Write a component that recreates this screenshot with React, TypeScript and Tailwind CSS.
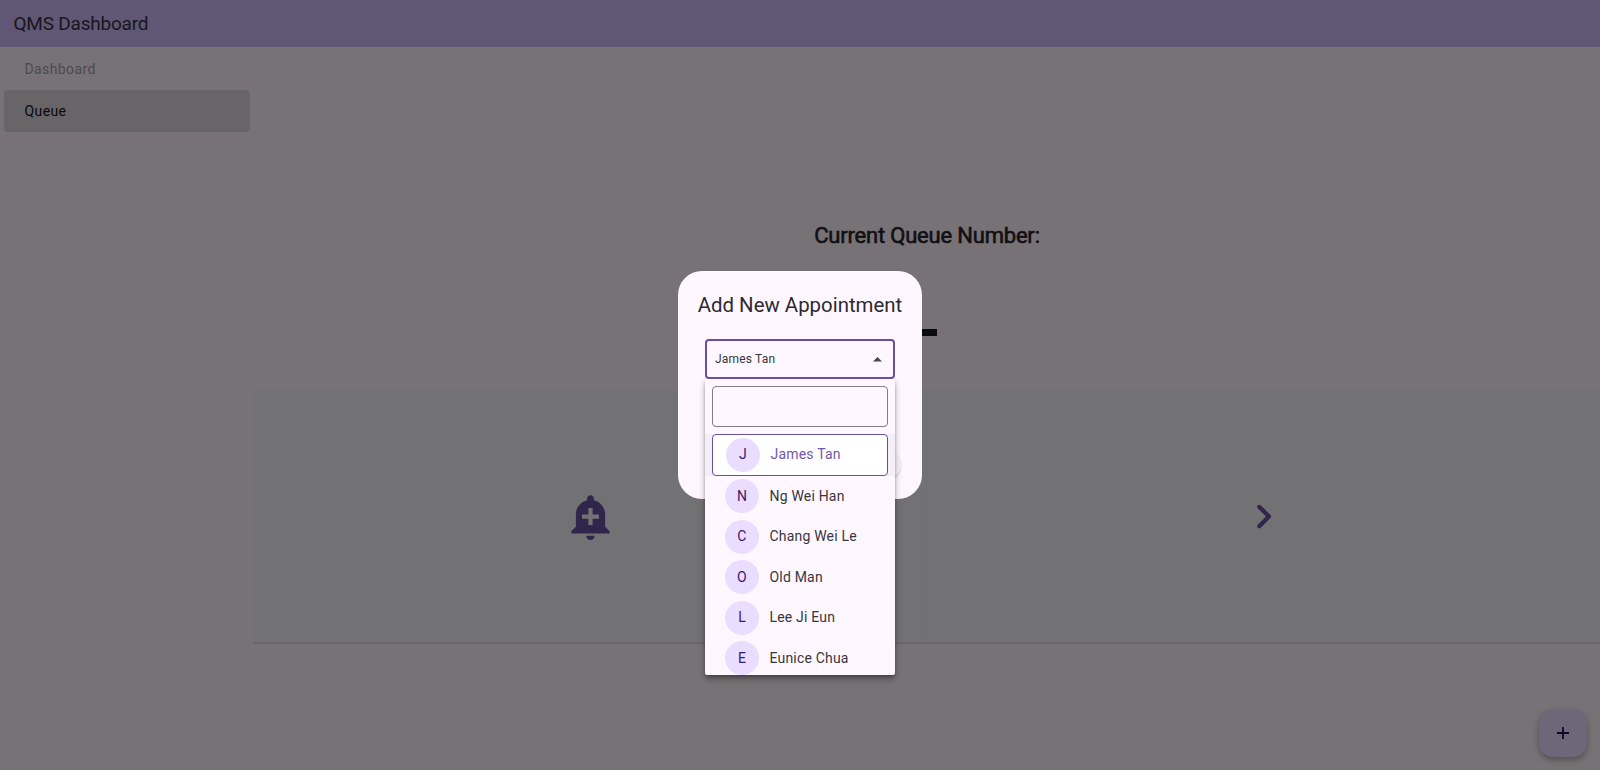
import { MdAddAlert } from 'react-icons/md';

const patients = ['James Tan', 'Ng Wei Han', 'Chang Wei Le', 'Old Man', 'Lee Ji Eun', 'Eunice Chua'];

function Avatar({ letter }: { letter: string }) {
  return (
    <span className="flex h-[34px] w-[34px] shrink-0 items-center justify-center rounded-full bg-[#eaddff] text-[14px] text-[#371a70]">
      {letter}
    </span>
  );
}

function Sidebar() {
  return (
    <nav className="w-[254px] shrink-0 pl-1 text-[14px] tracking-[0.4px]">
      <div className="flex h-[42.5px] items-center pt-[2px] pl-[20.5px] text-[#4c4a4e]">Dashboard</div>
      <div className="flex h-[42.5px] w-[245.5px] items-center rounded-[4px] bg-[#676567] pt-px pl-[20.5px] text-[#09080a]">Queue</div>
    </nav>
  );
}

function PatientMenu() {
  return (
    <div className="absolute top-full left-0 h-[296px] w-[190px] overflow-hidden rounded-b-[2px] bg-[#fef7ff] shadow-[0_4px_7px_rgba(0,0,0,0.3),0_2px_3px_rgba(0,0,0,0.2)]">
      <div className="px-[7px] pt-[7px] pb-[6.5px]">
        <input aria-label="Search" className="block h-[41px] w-full rounded-[4px] border border-[#817c86] bg-transparent px-2 outline-none" />
      </div>
      <div className="flex h-[42px] bg-[#f4eef6] px-[7px]">
        <div className="flex w-full items-center rounded-[4px] border border-[#6750a4] bg-white pl-[13px] text-[14px] tracking-[0.2px] text-[#7059a9]">
          <Avatar letter="J" />
          <span className="ml-[10.5px]">{patients[0]}</span>
        </div>
      </div>
      {patients.slice(1).map((name) => (
        <div key={name} className="flex h-[40.6px] items-center pt-[0.6px] pl-[20px] text-[14px] tracking-[0.19px] text-[#39363c]">
          <Avatar letter={name[0]} />
          <span className="ml-[10.5px]">{name}</span>
        </div>
      ))}
    </div>
  );
}

function AppointmentDialog() {
  return (
    <div className="absolute top-[271px] left-[678px] h-[228px] w-[244px] rounded-[24px] bg-[#fef7ff] pt-[20px]">
      <h2 className="text-center text-[20.4px] leading-[28px] whitespace-nowrap text-[#2c2a30]">Add New Appointment</h2>
      <div className="absolute right-[21px] bottom-[20px] h-[28px] w-[60px] rounded-full bg-[#f8f1fa] shadow-[0_1px_2px_rgba(0,0,0,0.2)]" />
      <div className="relative mx-[27px] mt-[20px] h-[40px]">
        <PatientMenu />
        <div className="relative flex h-full items-center justify-between rounded-[4px] border-2 border-[#6750a4] bg-[#fef7ff] pr-[11px] pl-[8px] text-[12px] tracking-[0.18px] text-[#39363c]">
          <span>James Tan</span>
          <svg width="9" height="5" viewBox="0 0 9 5"><path d="M0 4.5 4.5 0 9 4.5Z" fill="#49454f" /></svg>
        </div>
      </div>
    </div>
  );
}

export default function App() {
  return (
    <div className="relative flex h-[770px] w-[1600px] flex-col overflow-hidden bg-[#777276] font-[Roboto,sans-serif]">
      <header className="flex h-[47px] shrink-0 items-center bg-[#605775] pt-px pl-[13.5px] text-[19px] tracking-[-0.22px] text-[#19161d]">QMS Dashboard</header>
      <div className="flex flex-1">
        <Sidebar />
        <main className="flex flex-1 flex-col">
          <div className="flex h-[343px] flex-col items-center pt-[174px]">
            <h1 className="text-[22px] leading-[30px] font-normal tracking-[-0.2px] text-[#111013] [-webkit-text-stroke:0.6px_#111013]">Current Queue Number:</h1>
            <div className="mt-[78px] h-[7px] w-[20px] bg-[#0c0b0d]" />
          </div>
          <div className="flex h-[254px] border-b-2 border-[#69676a] bg-[#727173]">
            <div className="flex flex-1 items-center justify-center border-r border-[#706f71] text-[#30264b]">
              <MdAddAlert size={51} />
            </div>
            <div className="flex flex-1 items-center justify-center">
              <svg width="51" height="51" viewBox="0 0 24 24" fill="#30264b">
                <path d="M9.29 6.71c-.39.39-.39 1.02 0 1.41L13.17 12l-3.88 3.88c-.39.39-.39 1.02 0 1.41.39.39 1.02.39 1.41 0l4.59-4.59c.39-.39.39-1.02 0-1.41L10.7 6.7c-.38-.38-1.02-.38-1.41.01z" />
              </svg>
            </div>
          </div>
        </main>
      </div>
      <button aria-label="Add appointment" className="absolute top-[709px] left-[1539px] flex h-[48px] w-[48px] items-center justify-center rounded-[14px] bg-[#6e677a] shadow-[0_3px_6px_rgba(0,0,0,0.3)]">
        <svg width="12" height="12" viewBox="0 0 12 12" fill="#120625"><path d="M5.1 0h1.8v5.1H12v1.8H6.9V12H5.1V6.9H0V5.1h5.1Z" /></svg>
      </button>
      <AppointmentDialog />
    </div>
  );
}
